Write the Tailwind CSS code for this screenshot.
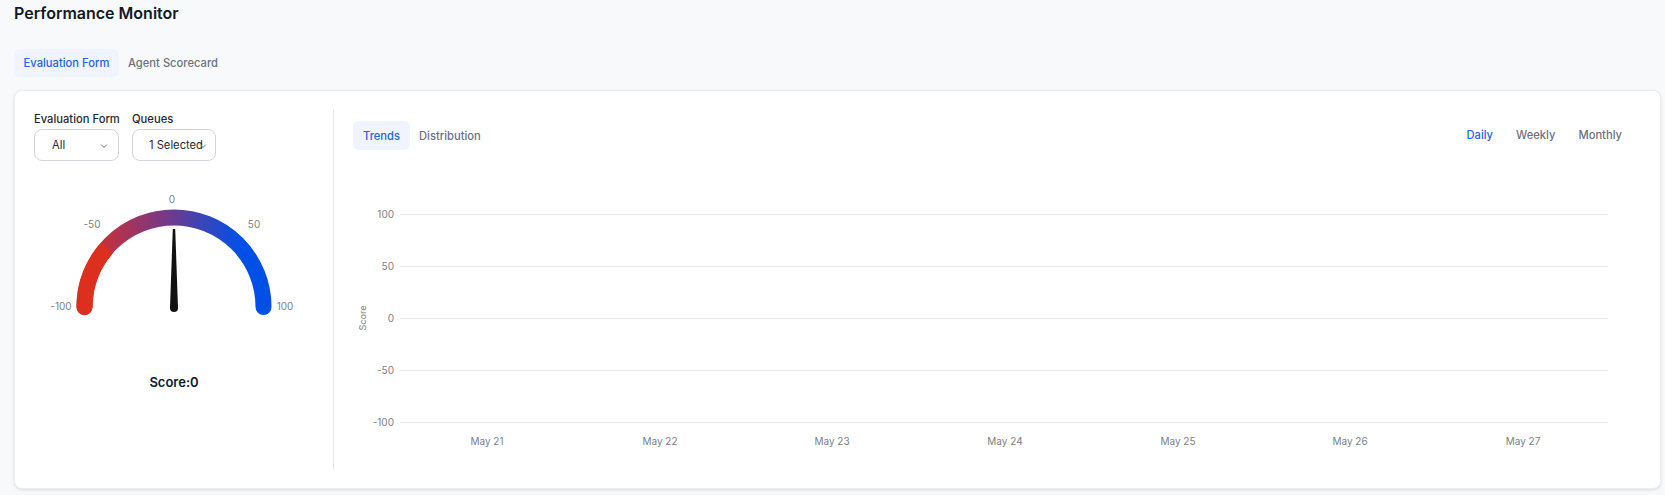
<!DOCTYPE html>
<html>
<head>
<meta charset="utf-8">
<script src="https://cdn.jsdelivr.net/npm/@tailwindcss/browser@4"></script>
<title>Performance Monitor</title>
</head>
<body class="bg-[#f8f9fb] font-['Inter',sans-serif] h-[495px] overflow-hidden">
<div class="pl-[14px] pr-[4px]">
  <h1 class="h-[27px] leading-[27px] text-[16px] font-semibold text-[#111827]">Performance Monitor</h1>

  <div class="flex mt-[22px] text-[11.2px] font-medium">
    <div class="h-[28px] w-[105px] flex items-center justify-center rounded-md bg-[#eff4ff] text-[#2563eb]">Evaluation Form</div>
    <div class="h-[28px] w-[108px] flex items-center justify-center text-[#6b7280]">Agent Scorecard</div>
  </div>

  <div class="mt-[13px] h-[399px] bg-white rounded-lg border border-[#eceef2] shadow-[0_1px_3px_rgba(0,0,0,0.12)] flex pt-[19px]">
    <div class="w-[319px] h-[360px] border-r border-[#e5e7eb] shrink-0 pl-[19px]">
      <div class="flex gap-[13px]">
        <div>
          <div class="text-[11.2px] font-medium text-[#1f2937] leading-[18px] h-[19px] w-[85px] whitespace-nowrap">Evaluation Form</div>
          <div class="w-[85px] h-[32px] rounded-lg border border-[#d1d5db] flex items-center pl-[17px] text-[11.2px] text-[#1f2937] relative">All
            <svg class="absolute right-[9px] top-[12px]" width="10" height="8" viewBox="0 0 10 8" fill="none" stroke="#6b7280" stroke-width="1"><path d="M2 2.5 5 5.5 8 2.5"/></svg>
          </div>
        </div>
        <div>
          <div class="text-[11.2px] font-medium text-[#1f2937] leading-[18px] h-[19px]">Queues</div>
          <div class="w-[84px] h-[32px] rounded-lg border border-[#d1d5db] flex items-center pl-[16px] text-[11.2px] text-[#1f2937] relative whitespace-nowrap">1 Selected
            <svg class="absolute right-[7px] top-[12px]" width="10" height="8" viewBox="0 0 10 8" fill="none" stroke="#6b7280" stroke-width="1"><path d="M2 2.5 5 5.5 8 2.5"/></svg>
          </div>
        </div>
      </div>

      <svg class="block mt-[28px] -ml-[34px]" width="320" height="205" viewBox="0 189 320 205" font-family="Inter, sans-serif" font-size="10" fill="#7b7f86">
        <defs>
          <linearGradient id="arc" gradientUnits="userSpaceOnUse" x1="100" y1="0" x2="240" y2="0">
            <stop offset="0" stop-color="#c92f3a"/>
            <stop offset="0.5" stop-color="#6f3a8c"/>
            <stop offset="1" stop-color="#0050e8"/>
          </linearGradient>
        </defs>
        <path d="M84.5 307 A89.5 89.5 0 0 1 263.5 307" fill="none" stroke="url(#arc)" stroke-width="16" stroke-linecap="round"/>
        <path d="M84.5 307 A89.5 89.5 0 0 1 107 248" fill="none" stroke="#dc2f1e" stroke-width="16"/>
        <path d="M84.5 307 v0.1" fill="none" stroke="#dc2f1e" stroke-width="16" stroke-linecap="round"/>
        <path d="M172.8 229 H175.2 L178 308 A4 4 0 0 1 170 308 Z" fill="#111111"/>
        <text x="172" y="203" text-anchor="middle">0</text>
        <text x="92" y="228" text-anchor="middle">-50</text>
        <text x="254" y="228" text-anchor="middle">50</text>
        <text x="61" y="310" text-anchor="middle">-100</text>
        <text x="285" y="310" text-anchor="middle">100</text>
        <text x="174" y="387" text-anchor="middle" font-size="13" font-weight="600" fill="#111827">Score:0</text>
      </svg>
    </div>

    <div class="flex-1 min-w-0 pl-[19px] pt-[11px]">
      <div class="flex items-center justify-between h-[29px] text-[11.2px] leading-[31px] font-medium pr-[38px]">
        <div class="flex">
          <div class="h-[29px] w-[57px] text-center rounded-md bg-[#eff4ff] text-[#2563eb]">Trends</div>
          <div class="h-[29px] ml-[9px] text-[#6b7280]">Distribution</div>
        </div>
        <div class="flex gap-[23px] text-[#6b7280]">
          <span class="text-[#2563eb]">Daily</span>
          <span>Weekly</span>
          <span>Monthly</span>
        </div>
      </div>
      <svg class="block -ml-[33px]" width="1300" height="319" viewBox="320 150 1300 319" font-family="Inter, sans-serif" font-size="10" fill="#7b7f86">
        <g stroke="#e2e8f0" stroke-width="1">
          <path d="M400 214.5H1608"/>
          <path d="M400 266.5H1608"/>
          <path d="M400 318.5H1608"/>
          <path d="M400 370.5H1608"/>
          <path d="M400 422.5H1608"/>
        </g>
        <g text-anchor="end">
          <text x="394" y="218">100</text>
          <text x="394" y="270">50</text>
          <text x="394" y="322">0</text>
          <text x="394" y="374">-50</text>
          <text x="394" y="426">-100</text>
        </g>
        <text transform="translate(366 318) rotate(-90)" text-anchor="middle" font-size="9">Score</text>
        <g text-anchor="middle">
          <text x="487" y="445">May 21</text>
          <text x="660" y="445">May 22</text>
          <text x="832" y="445">May 23</text>
          <text x="1005" y="445">May 24</text>
          <text x="1178" y="445">May 25</text>
          <text x="1350" y="445">May 26</text>
          <text x="1523" y="445">May 27</text>
        </g>
      </svg>
    </div>
  </div>
</div>
</body>
</html>
